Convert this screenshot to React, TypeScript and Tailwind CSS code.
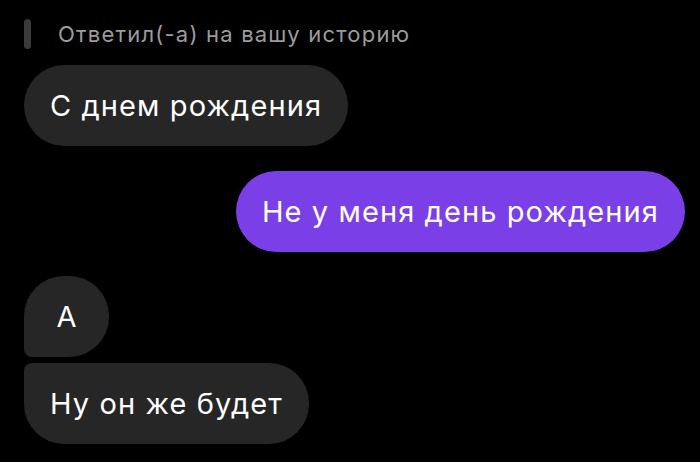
import React from 'react';

const font = { fontFamily: 'Inter, "Noto Sans", sans-serif' };

function Bubble({ children, className }: { children: React.ReactNode; className: string }) {
  return (
    <div className={`h-[81px] flex items-center px-[26px] text-[29px] tracking-[1.1px] text-white ${className}`}>
      {children}
    </div>
  );
}

export default function App() {
  return (
    <div
      className="w-[700px] h-[462px] bg-black overflow-hidden flex flex-col pl-6 pr-[15px]"
      style={font}
    >
      <div className="flex items-center gap-[27px] mt-[19px] h-[30px]">
        <div className="w-[7px] h-[30px] rounded-full bg-[#3a3a3a]" />
        <span className="text-[22px] text-[#9b9b9b] tracking-[1.2px]">Ответил(-а) на вашу историю</span>
      </div>

      <Bubble className="mt-4 self-start bg-[#262626] rounded-full">С днем рождения</Bubble>

      <Bubble className="mt-[25px] self-end bg-[#7a3fe6] rounded-full text-[#f4eefc]">
        Не у меня день рождения
      </Bubble>

      <div className="mt-6 self-start w-[85px] h-[81px] flex items-center justify-center bg-[#262626] rounded-[40px] rounded-bl-[8px] text-[29px] text-white">
        A
      </div>

      <Bubble className="mt-[6px] self-start bg-[#262626] rounded-[40px] rounded-tl-[8px]">Ну он же будет</Bubble>
    </div>
  );
}
